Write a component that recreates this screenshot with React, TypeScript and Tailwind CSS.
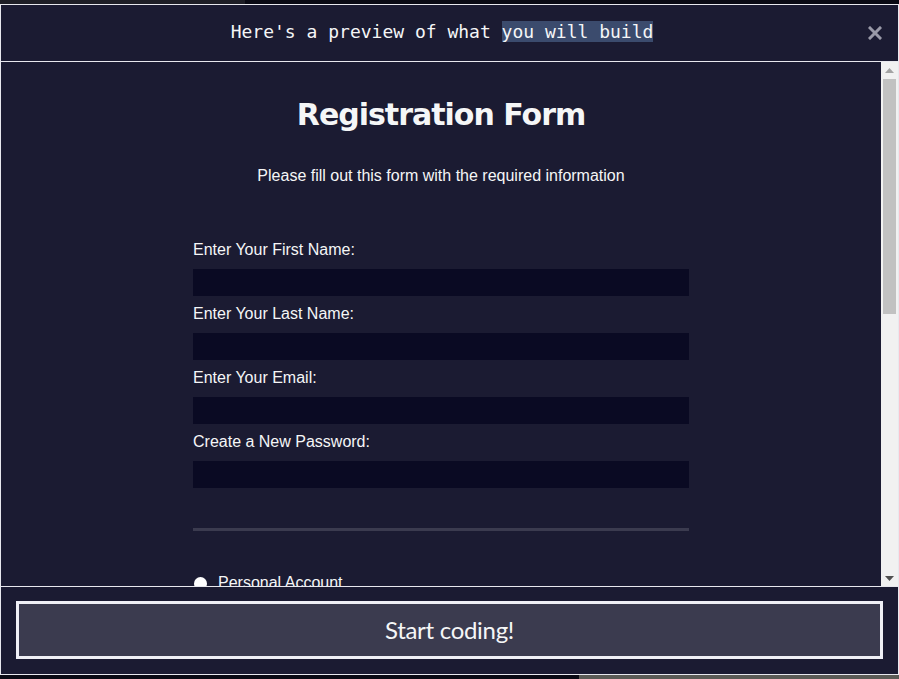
const Field = ({ label }: { label: string }) => {
  return (
    <div className="mb-[6px]">
      <label className="block text-[16px] leading-[24px]">{label}</label>
      <div className="mt-[7px] h-[27px] w-full bg-[#0a0a23]" />
    </div>
  )
}

const Scrollbar = () => {
  return (
    <div className="w-[17px] bg-[#f1f1f1] flex flex-col items-center relative">
      <svg width="9" height="5" viewBox="0 0 9 5" className="mt-[6px]">
        <polygon points="4.5,0 9,5 0,5" fill="#a3a3a3" />
      </svg>
      <div className="mt-[6px] w-[13px] h-[235px] bg-[#c1c1c1]" />
      <div className="flex-1" />
      <svg width="9" height="5" viewBox="0 0 9 5" className="mb-[5px]">
        <polygon points="0,0 9,0 4.5,5" fill="#505050" />
      </svg>
    </div>
  )
}

export default function App() {
  return (
    <div className="w-[899px] h-[679px] flex flex-col overflow-hidden bg-[#0a0a14] font-['Liberation_Sans',Arial,sans-serif]">
      {/* strip of the page behind the modal */}
      <div className="h-[4px] flex">
        <div className="w-[245px] bg-[#1e1e26]" />
        <div className="flex-1 bg-[#0a0a14]" />
      </div>

      <div className="h-[671px] flex flex-col border border-[#e8e8ee] bg-[#1b1b32]">
        <div className="h-[57px] relative flex items-center justify-center border-b border-[#e8e8ee] pr-[15px]">
          <p className="font-['DejaVu_Sans_Mono',monospace] text-[18px] leading-[26px] text-[#f5f6f7] mt-[-3px]">
            Here's a preview of what <span className="bg-[#3b4b6d]">you will build</span>
          </p>
          <svg width="14" height="14" viewBox="0 0 14 14" className="absolute right-[16px] top-[21px]">
            <path d="M2 2 L12 12 M12 2 L2 12" stroke="#9a9aa8" strokeWidth="3" strokeLinecap="square" />
          </svg>
        </div>

        <div className="h-[525px] flex border-b border-[#e8e8ee]">
          <div className="flex-1 overflow-hidden text-[#f5f6f7] pt-[33px]">
            <h1 className="text-center text-[30px] leading-[40px] font-bold font-['DejaVu_Sans',sans-serif] tracking-[-1px]">
              Registration Form
            </h1>
            <p className="text-center text-[16px] leading-[24px] mt-[29px]">
              Please fill out this form with the required information
            </p>
            <form className="w-[496px] mx-auto mt-[50px]">
              <Field label="Enter Your First Name:" />
              <Field label="Enter Your Last Name:" />
              <Field label="Enter Your Email:" />
              <Field label="Create a New Password:" />
              <div className="mt-[40px] h-[3px] bg-[#3b3b4f]" />
              <div className="mt-[40px] flex items-center gap-[11px] pl-[1px]">
                <span className="w-[13px] h-[13px] rounded-full bg-white" />
                <span className="text-[16px] leading-[24px]">Personal Account</span>
              </div>
            </form>
          </div>
          <Scrollbar />
        </div>

        <div className="flex-1 px-[15px] pt-[14px]">
          <button className="w-full h-[58px] border-[3px] border-[#f0f0f6] bg-[#3b3b4f] text-[#f5f6f7] text-[24px] font-['Lato',sans-serif] tracking-[-0.3px]">
            Start coding!
          </button>
        </div>
      </div>

      <div className="flex-1 flex">
        <div className="w-[579px] bg-[#0a0a14]" />
        <div className="flex-1 bg-[#5b5b56]" />
      </div>
    </div>
  )
}
